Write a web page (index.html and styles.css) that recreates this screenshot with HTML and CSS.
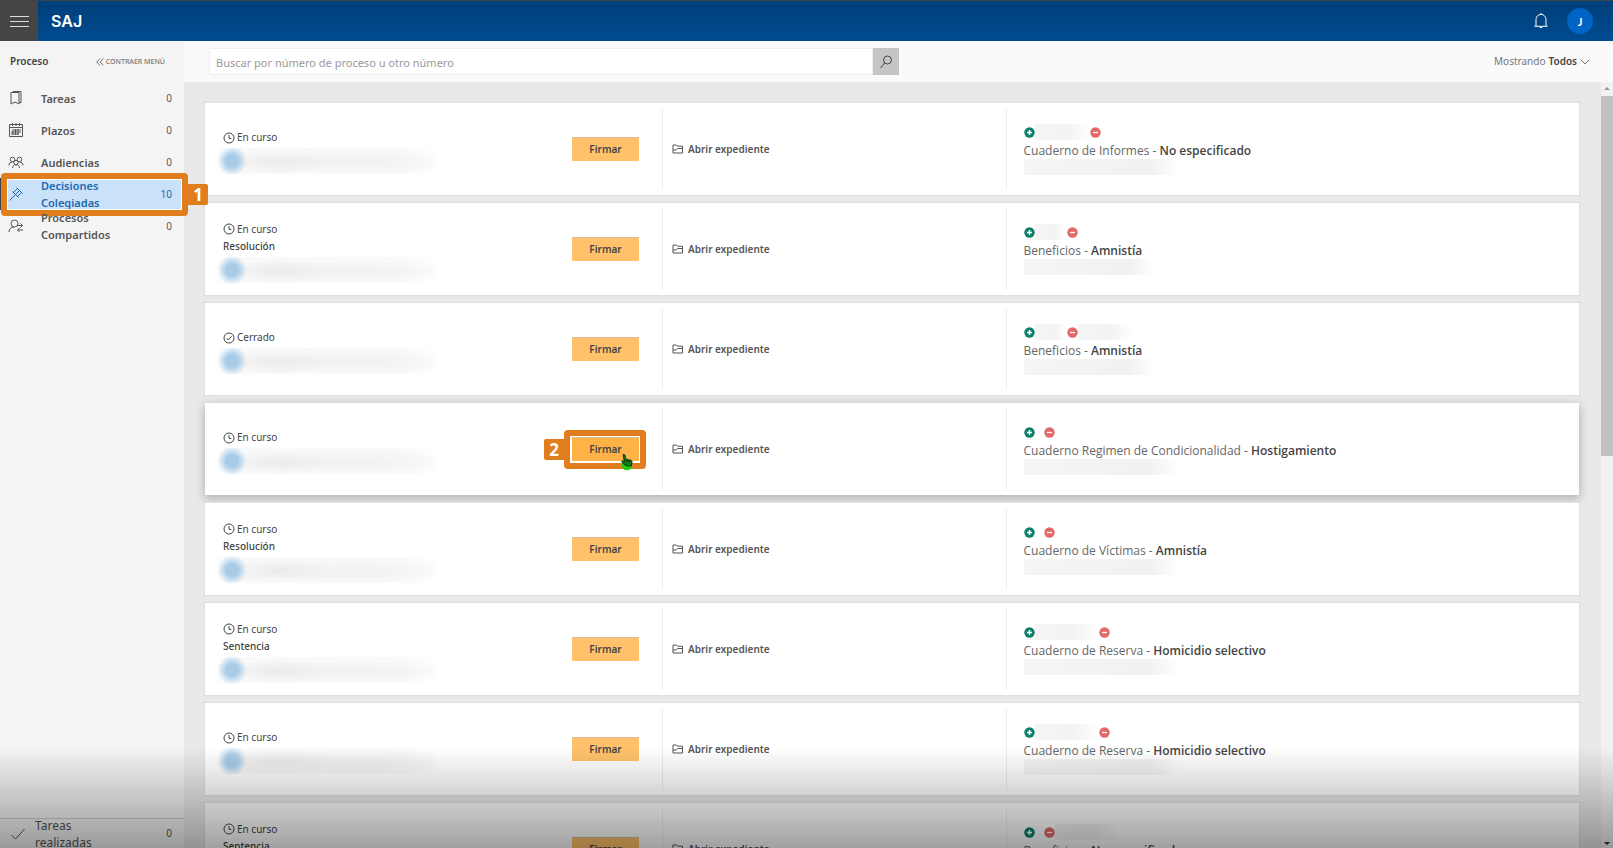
FILE: index.html
```html
<!DOCTYPE html>
<html lang="es">
	<head>
		<meta charset="UTF-8">
		<title>SAJ</title>
		<link rel="stylesheet" href="styles.css">
	</head>
	<body>
		<!-- iconos -->
		<svg class="sprite" aria-hidden="true">
			<symbol id="clock" viewBox="0 0 12 12"><circle cx="6" cy="6" r="5"/><path d="M6 3v3.4h2.4"/></symbol>
			<symbol id="done" viewBox="0 0 12 12"><circle cx="6" cy="6" r="5"/><path d="M3.6 6.2l1.8 1.8 3.2-3.8"/></symbol>
			<symbol id="folder" viewBox="0 0 12 12"><path d="M1 10V2h3.5l1 1.2H10.500V10zM1 7h3l1.500-1.500h5"/></symbol>
			<symbol id="plus" viewBox="0 0 11 11"><circle cx="5.5" cy="5.5" r="5.2" fill="#0b7f68" stroke="none"/><path d="M5.5 3v5M3 5.5h5" stroke="#fff" stroke-width="1.5"/></symbol>
			<symbol id="minus" viewBox="0 0 11 11"><circle cx="5.5" cy="5.5" r="5.2" fill="#e3696b" stroke="none"/><path d="M3 5.5h5" stroke="#fff" stroke-width="1.3"/></symbol>
		</svg>

		<header class="header">
			<button class="burger" aria-label="Menú"><i></i><i></i><i></i></button>
			<a class="logo" href="#">SAJ</a>
			<button class="bell" aria-label="Notificaciones">
				<svg width="16" height="18" viewBox="0 0 16 18"><path d="M8 1v1.4M3 14V7.4a5 5 0 0 1 10 0V14M1.4 14.3h13.2M6.4 14.6a1.7 1.7 0 0 0 3.2 0"/></svg>
			</button>
			<button class="avatar">J</button>
		</header>

		<div class="main">
			<nav class="sidebar">
				<div class="sidebarTop">
					<h2>Proceso</h2>
					<button class="collapse">
						<svg width="8" height="8" viewBox="0 0 8 8"><path d="M4 .5L.7 4 4 7.5M7.4 .5L4.1 4l3.3 3.5"/></svg>
						CONTRAER MENÚ
					</button>
				</div>
				<ul class="menu">
					<li><a href="#">
						<svg width="16" height="16" viewBox="0 0 16 16"><path d="M3 2.500h8v11.500L7 12l-4 2zM5 2.500V1.500h8v11.500l-2-1"/></svg>
						<span class="label">Tareas</span><span class="num">0</span>
					</a></li>
					<li><a href="#">
						<svg width="16" height="16" viewBox="0 0 16 16"><path d="M1.500 2.500h13v12h-13zM1.500 5.500h13M4.500 1v3M8 1v3M11.500 1v3M6 8h7M3 10h10M3 12h8" /><path d="M5 7v6M7.500 7v6M10 7v6"/></svg>
						<span class="label">Plazos</span><span class="num">0</span>
					</a></li>
					<li><a href="#">
						<svg width="16" height="16" viewBox="0 0 16 16"><circle cx="4.500" cy="5.500" r="2.300"/><circle cx="11.500" cy="5.500" r="2.300"/><circle cx="8" cy="8.500" r="2.200"/><path d="M1 11.500c0-2.200 1.500-3.500 3.500-3.500M15 11.500c0-2.200-1.500-3.500-3.500-3.500M4.500 14c0-2 1.500-3.300 3.500-3.300s3.500 1.300 3.500 3.300"/></svg>
						<span class="label">Audiencias</span><span class="num">0</span>
					</a></li>
					<li class="current"><a href="#">
						<svg width="16" height="16" viewBox="0 0 16 16"><path d="M8.500 1.500l6 6M4.500 5.500l6 6M9.500 2.500l-4 4M13.500 6.500l-4 4M11.500 4.500l-4 4M7 9l-5.500 5.500"/></svg>
						<span class="label">Decisiones Colegiadas</span><span class="num">10</span>
						</a>
						<span class="mark markMenu"><b>1</b></span>
					</li>
					<li><a href="#">
						<svg width="16" height="16" viewBox="0 0 16 16"><circle cx="6.500" cy="5.500" r="3.500"/><path d="M1 14c0-3 2-5 5-5M9 7.500h5.500M12.500 5.500l2 2-2 2M15 12H9.500M11.500 10l-2 2 2 2"/></svg>
						<span class="label">Procesos Compartidos</span><span class="num">0</span>
					</a></li>
				</ul>
				<a class="finished" href="#">
					<svg width="16" height="16" viewBox="0 0 16 16"><path d="M1.500 9l4 4L14.500 3"/></svg>
					<span class="label">Tareas realizadas</span><span class="num">0</span>
				</a>
			</nav>

			<div class="content">
				<div class="toolbar">
					<form class="search">
						<input type="text" aria-label="Buscar" placeholder="Buscar por número de proceso u otro número">
						<button type="button" aria-label="Buscar">
							<svg width="14" height="14" viewBox="0 0 14 14"><circle cx="8.500" cy="5" r="4"/><path d="M5.700 8L1.500 13"/></svg>
						</button>
					</form>
					<button class="filter">Mostrando <b>Todos</b>
						<svg width="10" height="6" viewBox="0 0 10 6"><path d="M.7 .7L5 5 9.300 .7"/></svg>
					</button>
				</div>

				<div class="scroll">
					<ul class="list">
						<li class="card">
							<div class="state">
								<div class="info">
									<p><svg><use href="#clock"/></svg>En curso</p>
									<div class="person"></div>
								</div>
								<div class="sign"><button>Firmar</button></div>
							</div>
							<div class="open"><a href="#"><svg><use href="#folder"/></svg>Abrir expediente</a></div>
							<div class="detail">
								<div class="parts"><svg><use href="#plus"/></svg><i class="name medium"></i><svg><use href="#minus"/></svg></div>
								<p>Cuaderno de Informes - <b>No especificado</b></p>
								<div class="number"></div>
							</div>
						</li>
						<li class="card">
							<div class="state">
								<div class="info">
									<p><svg><use href="#clock"/></svg>En curso</p>
									<p class="kind">Resolución</p>
									<div class="person"></div>
								</div>
								<div class="sign"><button>Firmar</button></div>
							</div>
							<div class="open"><a href="#"><svg><use href="#folder"/></svg>Abrir expediente</a></div>
							<div class="detail">
								<div class="parts"><svg><use href="#plus"/></svg><i class="name small"></i><svg><use href="#minus"/></svg></div>
								<p>Beneficios - <b>Amnistía</b></p>
								<div class="number short"></div>
							</div>
						</li>
						<li class="card">
							<div class="state">
								<div class="info">
									<p><svg><use href="#done"/></svg>Cerrado</p>
									<div class="person"></div>
								</div>
								<div class="sign"><button>Firmar</button></div>
							</div>
							<div class="open"><a href="#"><svg><use href="#folder"/></svg>Abrir expediente</a></div>
							<div class="detail">
								<div class="parts"><svg><use href="#plus"/></svg><i class="name small"></i><svg><use href="#minus"/></svg><i class="name medium"></i></div>
								<p>Beneficios - <b>Amnistía</b></p>
								<div class="number short"></div>
							</div>
						</li>
						<li class="card hover">
							<div class="state">
								<div class="info">
									<p><svg><use href="#clock"/></svg>En curso</p>
									<div class="person"></div>
								</div>
								<div class="sign">
									<button>Firmar</button>
									<span class="mark markSign"><b>2</b></span>
									<svg class="cursor" viewBox="0 0 16 20"><ellipse cx="8" cy="14" rx="6" ry="5.500" fill="#1fd012" stroke="none"/><path d="M3.500 1.500c1-.8 2 0 2.200 1L7 7l5.500 1c1.500.5 1.500 2 1 4L13 14.500H7L2 10c-.6-1 .6-1.600 1.600-1L5 10z" fill="#0c7a17" stroke="#062b0a"/><path d="M8 7v3M10.500 8v2.500" stroke="#062b0a"/></svg>
								</div>
							</div>
							<div class="open"><a href="#"><svg><use href="#folder"/></svg>Abrir expediente</a></div>
							<div class="detail">
								<div class="parts"><svg><use href="#plus"/></svg><i class="name none"></i><svg><use href="#minus"/></svg></div>
								<p>Cuaderno Regimen de Condicionalidad - <b>Hostigamiento</b></p>
								<div class="number"></div>
							</div>
						</li>
						<li class="card">
							<div class="state">
								<div class="info">
									<p><svg><use href="#clock"/></svg>En curso</p>
									<p class="kind">Resolución</p>
									<div class="person"></div>
								</div>
								<div class="sign"><button>Firmar</button></div>
							</div>
							<div class="open"><a href="#"><svg><use href="#folder"/></svg>Abrir expediente</a></div>
							<div class="detail">
								<div class="parts"><svg><use href="#plus"/></svg><i class="name none"></i><svg><use href="#minus"/></svg></div>
								<p>Cuaderno de Víctimas - <b>Amnistía</b></p>
								<div class="number"></div>
							</div>
						</li>
						<li class="card">
							<div class="state">
								<div class="info">
									<p><svg><use href="#clock"/></svg>En curso</p>
									<p class="kind">Sentencia</p>
									<div class="person"></div>
								</div>
								<div class="sign"><button>Firmar</button></div>
							</div>
							<div class="open"><a href="#"><svg><use href="#folder"/></svg>Abrir expediente</a></div>
							<div class="detail">
								<div class="parts"><svg><use href="#plus"/></svg><i class="name large"></i><svg><use href="#minus"/></svg></div>
								<p>Cuaderno de Reserva - <b>Homicidio selectivo</b></p>
								<div class="number"></div>
							</div>
						</li>
						<li class="card">
							<div class="state">
								<div class="info">
									<p><svg><use href="#clock"/></svg>En curso</p>
									<div class="person"></div>
								</div>
								<div class="sign"><button>Firmar</button></div>
							</div>
							<div class="open"><a href="#"><svg><use href="#folder"/></svg>Abrir expediente</a></div>
							<div class="detail">
								<div class="parts"><svg><use href="#plus"/></svg><i class="name large"></i><svg><use href="#minus"/></svg></div>
								<p>Cuaderno de Reserva - <b>Homicidio selectivo</b></p>
								<div class="number"></div>
							</div>
						</li>
						<li class="card">
							<div class="state">
								<div class="info">
									<p><svg><use href="#clock"/></svg>En curso</p>
									<p class="kind">Sentencia</p>
									<div class="person"></div>
								</div>
								<div class="sign"><button>Firmar</button></div>
							</div>
							<div class="open"><a href="#"><svg><use href="#folder"/></svg>Abrir expediente</a></div>
							<div class="detail">
								<div class="parts"><svg><use href="#plus"/></svg><i class="name none"></i><svg><use href="#minus"/></svg><i class="name large"></i></div>
								<p>Beneficios - <b>No especificado</b></p>
								<div class="number"></div>
							</div>
						</li>
					</ul>
					<div class="bar">
						<i class="up"></i>
						<i class="thumb"></i>
						<i class="down"></i>
					</div>
				</div>
			</div>
		</div>

		<div class="shade"></div>
	</body>
</html>
```
FILE: styles.css
```css
*{
	margin: 0;
	padding: 0;
	box-sizing: border-box;
}
ul,li{
	list-style: none;
}

a{
	text-decoration: none;
	color: inherit;
}

button,input{
	font: inherit;
	color: inherit;
	border: none;
	outline: none;
	background: none;
}

svg{
	display: block;
	flex: none;
	fill: none;
	stroke: currentColor;
}

b,h2{
	font-weight: 600;
}

body{
	display: flex;
	flex-direction: column;
	height: 100vh;
	overflow: hidden;
	font: 11px/17px "Noto Sans", "Open Sans", sans-serif;
	color: #444;
	background: #e9e9e9;
}

.sprite{
	position: absolute;
	width: 0;
	height: 0;
}

/* cabecera */
.header{
	display: flex;
	flex: none;
	align-items: center;
	height: 41px;
	padding-right: 20px;
	border-top: 1px solid #3b454e;
	background: linear-gradient(#003f79, #004b90);
	color: #fff;
}

.burger{
	display: flex;
	flex-direction: column;
	align-items: center;
	justify-content: center;
	gap: 4px;
	width: 38px;
	height: 40px;
	background: #454545;
}

.burger i{
	width: 19px;
	height: 1px;
	background: #ddd;
}

.logo{
	margin-left: 13px;
	margin-right: auto;
	font: 600 16px/20px Inter, sans-serif;
}

.bell{
	margin-right: 18px;
}

.avatar{
	width: 26px;
	height: 26px;
	border-radius: 50%;
	background: #0063c6;
	font-family: Lato, sans-serif;
	font-weight: 700;
}

.main{
	display: flex;
	flex: 1;
	min-height: 0;
}

/* menu lateral */
.sidebar{
	display: flex;
	flex: none;
	flex-direction: column;
	position: relative;
	z-index: 1;
	width: 184px;
	background: #f4f4f4;
}

.sidebarTop{
	display: flex;
	align-items: center;
	justify-content: space-between;
	height: 41px;
	padding: 0 19px 0 10px;
}

.sidebarTop h2{
	font-size: 10px;
}

.collapse{
	display: flex;
	align-items: center;
	gap: 2px;
	font-size: 7px;
	font-weight: 500;
	color: #777;
}

.menu li{
	position: relative;
}

.menu a,.finished{
	display: flex;
	align-items: center;
	height: 32px;
	padding: 0 12px 0 8px;
	font-weight: 600;
	color: #555;
}

.label{
	width: 90px;
	margin-left: 17px;
}

.num{
	margin-left: auto;
	font-size: 10px;
	font-weight: 400;
}

.menu .current a{
	border-left: 2px solid #444;
	padding-left: 6px;
	background: #c9e2fa;
	color: #2368ac;
}

.finished{
	height: 30px;
	margin-top: auto;
	padding-left: 10px;
	border-top: 1px solid #ccc;
	font-size: 12px;
	font-weight: 400;
}

.finished .label{
	width: 80px;
	margin-left: 9px;
}

/* marcos naranjas con numero */
.mark{
	position: absolute;
	border: 6px solid #e07d1c;
	border-radius: 4px;
	box-shadow: inset 0 0 0 1px #fff;
	pointer-events: none;
}

.mark b{
	position: absolute;
	width: 20px;
	height: 21px;
	background: #e07d1c;
	font-size: 17px;
	font-weight: 700;
	line-height: 21px;
	text-align: center;
	color: #fff;
}

.markMenu{
	top: -5px;
	right: -4px;
	bottom: -6px;
	left: 1px;
}

.markMenu b{
	left: 100%;
	top: 5px;
	margin-left: 6px;
	border-radius: 0 2px 2px 0;
}

/* barra de busqueda */
.content{
	display: flex;
	flex: 1;
	flex-direction: column;
	min-width: 0;
}

.toolbar{
	display: flex;
	flex: none;
	align-items: center;
	justify-content: space-between;
	height: 41px;
	padding: 0 23px 0 25px;
	background: #fafafa;
}

.search{
	display: flex;
	width: 690px;
	height: 27px;
}

.search input{
	flex: 1;
	padding: 1px 6px 0;
	border: 1px solid #eee;
	background: #fff;
}

.search input::placeholder{
	color: #999;
}

.search button{
	display: flex;
	align-items: center;
	justify-content: center;
	width: 26px;
	background: #c5c5c5;
}

.filter{
	display: flex;
	align-items: center;
	gap: 3px;
	font-size: 10px;
	color: #777;
}

.filter b{
	color: #444;
}

/* lista */
.scroll{
	display: flex;
	flex: 1;
	min-height: 0;
}

.list{
	flex: 1;
	padding: 21px 22px 0 21px;
	overflow: hidden;
}

.card{
	display: grid;
	grid-template-columns: 4fr 3fr 5fr;
	height: 92px;
	margin-bottom: 8px;
	padding: 5px 0;
	background: #fff;
	box-shadow: 0 0 1px 1px #e0e0e0;
}

.card.hover{
	box-shadow: 0 3px 9px 1px #b4b4b4;
}

.state,.open{
	display: flex;
	align-items: center;
	border-right: 1px solid #eee;
}

.state{
	justify-content: space-between;
	padding-right: 23px;
}

.info{
	padding: 5px 0 0 18px;
	font-size: 10px;
}

.info p{
	display: flex;
	align-items: center;
	gap: 2px;
}

.info svg{
	width: 12px;
	height: 12px;
}

.info .kind{
	font-weight: 500;
}

/* datos ocultos */
.person{
	width: 222px;
	height: 26px;
	margin: 2px 0 0 -9px;
	background:
		radial-gradient(circle at 18px 13px, #a8cce8 0, #a8cce8 6px, transparent 15px),
		radial-gradient(60px 12px at 65px 14px, #ebebeb, transparent),
		radial-gradient(110px 12px at 145px 14px, #f1f1f1, transparent),
		linear-gradient(90deg, #fff, #f9f9f9 15%, #f9f9f9 85%, #fff);
}

.sign{
	position: relative;
}

.sign button{
	display: block;
	width: 67px;
	height: 24px;
	background: #ffc26b;
	border-top: 1px solid #d9bd94;
	font-size: 10px;
	font-weight: 600;
}

.hover .sign button{
	background: #ffb347;
}

.markSign{
	inset: -7px -7px -8px -8px;
}

.markSign b{
	right: 100%;
	top: 3px;
	margin-right: 6px;
	border-radius: 2px 0 0 2px;
}

.cursor{
	position: absolute;
	left: 48px;
	top: 16px;
	width: 14px;
	height: 18px;
}

.open{
	padding-left: 9px;
	font-size: 10px;
	font-weight: 600;
	color: #555;
}

.open a{
	display: flex;
	align-items: center;
	gap: 4px;
}

.open svg{
	width: 12px;
	height: 12px;
}

.detail{
	align-self: center;
	padding: 1px 0 0 17px;
}

.detail p{
	font-family: "Open Sans", sans-serif;
	font-size: 12px;
	line-height: 22px;
	color: #666;
}

.detail b{
	color: #444;
}

.parts{
	display: flex;
	align-items: center;
	height: 16px;
}

.parts svg{
	width: 11px;
	height: 11px;
}

.name{
	height: 16px;
	background: linear-gradient(90deg, #f5f5f5, #f3f3f3 60%, #fff);
}

.name.none{
	width: 9px;
	background: none;
}

.name.small{
	width: 32px;
}

.name.medium{
	width: 55px;
}

.name.large{
	width: 64px;
}

.number{
	width: 156px;
	height: 16px;
	margin-top: -3px;
	background: linear-gradient(90deg, #f5f5f5, #f1f1f1 80%, #fff);
}

.number.short{
	width: 132px;
}

/* barra de desplazamiento */
.bar{
	display: flex;
	flex-direction: column;
	align-items: center;
	width: 12px;
	padding: 5px 0 3px;
	background: #f1f1f1;
}

.bar i{
	border: 3px solid transparent;
}

.bar .up{
	border-top: none;
	border-bottom-color: #999;
	margin: 0 0 6px;
}

.bar .thumb{
	width: 12px;
	height: 360px;
	border: none;
	background: #c1c1c1;
}

.bar .down{
	margin-top: auto;
	border-bottom: none;
	border-top-color: #333;
}

.shade{
	position: fixed;
	left: 0;
	right: 0;
	bottom: 0;
	z-index: 2;
	height: 100px;
	background: linear-gradient(transparent, rgba(0,0,0,.37));
	pointer-events: none;
}
```
